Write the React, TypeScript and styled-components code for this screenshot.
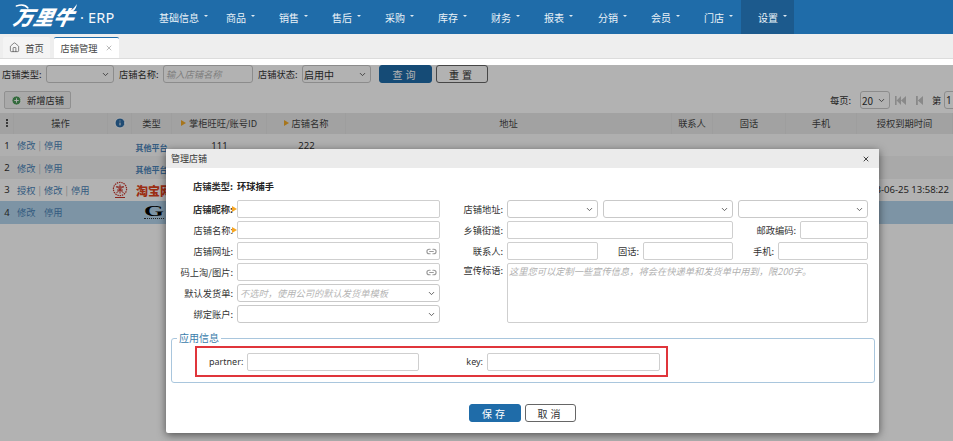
import React from 'react';
import styled, { createGlobalStyle } from 'styled-components';
import { ChevronDown, CirclePlus, EllipsisVertical, House, Info, Link2, X } from 'lucide-react';

const Global = createGlobalStyle`
  html, body { margin: 0; padding: 0; background: #fff; }
  * { box-sizing: border-box; }
  body { font-family: "Noto Sans CJK SC", "Noto Sans", sans-serif; font-size: 9.25px; color: #333; }
`;

const Page = styled.div`
  position: relative;
  width: 953px;
  height: 441px;
  overflow: hidden;
`;

const TopBar = styled.header`
  height: 34px;
  background: #1f6ca9;
  display: flex;
  align-items: stretch;
  padding-left: 14px;
`;

const Brand = styled.div`
  width: 128px;
  display: flex;
  align-items: center;
  color: #fff;
`;

const BrandMark = styled.span`
  position: relative;
  font-size: 20px;
  font-weight: 900;
  font-style: italic;
  line-height: 1;
  transform: skewX(-12deg);
  width: 62px;
  letter-spacing: 0;
`;

const BrandHorn = styled.svg`
  position: absolute;
  left: -2px;
  top: -4px;
  width: 66px;
  height: 12px;
`;

const BrandSuffix = styled.span`
  font-family: "Noto Sans", sans-serif;
  font-size: 14.5px;
  letter-spacing: 0.2px;
  white-space: pre;
  opacity: 0.95;
`;

const Nav = styled.nav`
  display: flex;
`;

const NavItem = styled.div<{ $active?: boolean; $w: number }>`
  width: ${p => p.$w}px;
  display: flex;
  align-items: center;
  padding-left: 17px;
  gap: 5px;
  color: #eaf2f8;
  font-size: 10px;
  background: ${p => (p.$active ? '#1c5a8d' : 'transparent')};
`;

const Caret = styled.span`
  width: 0;
  height: 0;
  border-left: 2px solid transparent;
  border-right: 2px solid transparent;
  border-top: 2px solid #dfe9f1;
  margin-top: -3px;
`;

const TabBar = styled.div`
  height: 25px;
  background: #eeeeee;
  border-bottom: 1px solid #dcdcdc;
  display: flex;
  align-items: flex-end;
  padding-left: 3px;
  gap: 4px;
`;

const Tab = styled.div<{ $active?: boolean }>`
  height: 21px;
  width: ${p => (p.$active ? 65 : 47)}px;
  display: flex;
  align-items: center;
  justify-content: center;
  gap: ${p => (p.$active ? 7 : 5)}px;
  background: ${p => (p.$active ? '#fff' : '#f4f4f4')};
  border-top: ${p => (p.$active ? '1px solid #1f6ca9' : 'none')};
  border-radius: 2px 2px 0 0;
  font-size: 9.25px;
  color: #444;
`;

const Content = styled.main`
  position: relative;
  height: 382px;
  background: #fff;
`;

const Dim = styled.div`
  position: absolute;
  inset: 0;
  background: rgba(0, 0, 0, 0.3);
`;

const FilterBar = styled.div`
  display: flex;
  align-items: center;
  height: 18px;
  margin-top: 6px;
  padding-left: 2px;
  gap: 5px;
`;

const Lbl = styled.span<{ $w?: number }>`
  width: ${p => (p.$w ? `${p.$w}px` : 'auto')};
  flex-shrink: 0;
  white-space: nowrap;
  color: #333;
  font-size: 9.25px;
`;

const SelectBox = styled.div<{ $w: number }>`
  width: ${p => p.$w}px;
  height: 18px;
  flex-shrink: 0;
  background: #fff;
  border: 1px solid #c9c9c9;
  border-radius: 3px;
  display: flex;
  align-items: center;
  justify-content: space-between;
  padding: 0 3px 0 1px;
  font-size: 10px;
  color: #333;
`;

const Placeholder = styled.span`
  color: #b5b5b5;
  font-style: italic;
  font-size: 9.25px;
  white-space: nowrap;
  padding-left: 1px;
`;

const SearchBox = styled.input<{ $w: number }>`
  width: ${p => p.$w}px;
  height: 18px;
  flex-shrink: 0;
  border: 1px solid #c9c9c9;
  border-radius: 3px;
  background: #fff;
  padding: 0 2px;
  font: inherit;
  &::placeholder { color: #b5b5b5; font-style: italic; }
`;

const Btn = styled.button<{ $primary?: boolean; $w: number; $ml?: number }>`
  width: ${p => p.$w}px;
  height: 18px;
  flex-shrink: 0;
  margin-left: ${p => p.$ml ?? 0}px;
  padding: 0;
  font-family: inherit;
  font-size: 10px;
  letter-spacing: 3px;
  border-radius: 3px;
  border: 1px solid ${p => (p.$primary ? '#1f6ca9' : '#666')};
  background: ${p => (p.$primary ? '#1f6ca9' : '#fff')};
  color: ${p => (p.$primary ? '#fff' : '#333')};
`;

const Toolbar = styled.div`
  display: flex;
  align-items: center;
  height: 18px;
  margin-top: 8px;
  padding-left: 4px;
`;

const AddBtn = styled.button`
  width: 67px;
  height: 18px;
  flex-shrink: 0;
  padding: 0;
  border: 1px solid #cfcfcf;
  border-radius: 2px;
  background: #f3f3f3;
  font-family: inherit;
  font-size: 9.25px;
  color: #333;
  display: flex;
  align-items: center;
  justify-content: center;
  gap: 5px;
`;

const Pager = styled.div`
  display: flex;
  align-items: center;
  margin-left: 759px;
  flex-shrink: 0;
  gap: 5px;
`;

const PagerIcon = styled.svg<{ $gap: number }>`
  display: block;
  flex-shrink: 0;
  margin-right: ${p => p.$gap}px;
  fill: #c4c4c4;
`;

const PageInput = styled.div`
  width: 30px;
  height: 18px;
  flex-shrink: 0;
  border: 1px solid #c9c9c9;
  border-radius: 3px;
  background: #fff;
  font-family: "Noto Sans", sans-serif;
  font-size: 10px;
  padding-left: 1px;
  display: flex;
  align-items: center;
  margin-left: -1px;
`;

const COLS = '14px 94px 24px 40px 95px 79px 326px 41px 73px 71px 96px';

const HeadRow = styled.div`
  display: grid;
  grid-template-columns: ${COLS};
  height: 21px;
  margin-top: 4px;
  background: #e9e9e9;
`;

const HeadCell = styled.div`
  display: flex;
  align-items: center;
  justify-content: center;
  padding-bottom: 1px;
  border-right: 1px solid #e2e2e2;
  font-size: 9.25px;
  color: #444;
  white-space: nowrap;
  gap: 2px;
`;

const Marker = styled.span`
  width: 0;
  height: 0;
  border-top: 3px solid transparent;
  border-bottom: 3px solid transparent;
  border-left: 5px solid #f0a92a;
  margin-right: 1px;
`;

const BodyRow = styled.div<{ $bg: string }>`
  display: grid;
  grid-template-columns: ${COLS};
  height: 22.4px;
  background: ${p => p.$bg};
`;

const Cell = styled.div<{ $align?: string; $pr?: number }>`
  display: flex;
  align-items: center;
  justify-content: ${p => p.$align ?? 'center'};
  padding-right: ${p => p.$pr ?? 0}px;
  font-family: "Noto Sans", "Noto Sans CJK SC", sans-serif;
  font-size: 9.5px;
  color: #333;
  white-space: nowrap;
  min-width: 0;
`;

const Ops = styled(Cell)`
  padding-left: 3px;
  justify-content: flex-start;
  gap: 3px;
  font-family: "Noto Sans CJK SC", sans-serif;
  font-size: 9.25px;
`;

const OpLink = styled.a`
  color: #4a83b8;
`;

const Sep = styled.span<{ $hidden?: boolean }>`
  color: #b8b8b8;
  visibility: ${p => (p.$hidden ? 'hidden' : 'visible')};
`;

const PlatformText = styled.span`
  font-family: "Noto Sans CJK SC", sans-serif;
  font-size: 8px;
  font-weight: 700;
  color: #4a83b8;
  margin-top: 4px;
  margin-left: -1px;
`;

const TaobaoText = styled.span`
  font-family: "Noto Sans CJK SC", sans-serif;
  font-size: 12px;
  font-weight: 900;
  color: #e0431c;
  margin-left: 4px;
  margin-top: 2px;
`;

const GLogo = styled.div`
  display: flex;
  flex-direction: column;
  align-items: center;
  margin-left: 11px;
  width: 22px;
`;

const GMark = styled.span`
  font-family: "Liberation Serif", serif;
  font-size: 15px;
  font-weight: 700;
  color: #000;
  line-height: 11px;
  display: block;
  transform: scaleX(1.7);
`;

const GRule = styled.span`
  display: block;
  width: 20px;
  height: 0;
  margin-top: 1px;
  border-top: 1px dotted #333;
`;

const Dialog = styled.section`
  position: absolute;
  left: 166px;
  top: 149px;
  width: 713px;
  height: 284px;
  background: #fff;
  border-radius: 2px;
  box-shadow: 0 2px 8px rgba(0, 0, 0, 0.55);
  display: flex;
  flex-direction: column;
`;

const DialogHead = styled.div`
  height: 19px;
  flex-shrink: 0;
  background: #ebebeb;
  display: flex;
  align-items: center;
  justify-content: space-between;
  padding: 0 9px 0 5px;
  font-size: 9px;
  color: #333;
`;

const CloseIcon = styled.span`
  display: flex;
  color: #444;
`;

const FormArea = styled.div`
  display: grid;
  grid-template-columns: 274px 405px;
  column-gap: 18px;
  margin-top: 9px;
  padding-left: 5px;
`;

const FormCol = styled.div`
  display: flex;
  flex-direction: column;
  gap: 3px;
`;

const TypeRow = styled.div`
  grid-column: 1 / span 2;
  display: flex;
  align-items: center;
  height: 18px;
  margin-bottom: 5px;
  gap: 4px;
`;

const FormRow = styled.div`
  display: flex;
  align-items: center;
  height: 18px;
  gap: 4px;
`;

const AreaRow = styled.div`
  display: flex;
  align-items: flex-start;
  height: 60px;
  gap: 4px;
`;

const FormLabel = styled.label<{ $w: number; $strong?: boolean; $marked?: boolean }>`
  width: ${p => p.$w}px;
  flex-shrink: 0;
  text-align: right;
  white-space: nowrap;
  font-size: 9.25px;
  font-weight: ${p => (p.$strong ? 700 : 400)};
  color: #333;
  position: relative;
  z-index: 1;
`;

const ReqMark = styled.i`
  position: absolute;
  right: -4px;
  top: 50%;
  margin-top: -3px;
  width: 0;
  height: 0;
  border-top: 3px solid transparent;
  border-bottom: 3px solid transparent;
  border-left: 5px solid #f5a623;
`;

const TypeValue = styled.strong`
  font-size: 9.25px;
  color: #222;
`;

const TextField = styled.input<{ $w: number }>`
  width: ${p => p.$w}px;
  height: 18px;
  flex-shrink: 0;
  border: 1px solid #cfcfcf;
  border-radius: 2px;
  background: #fff;
  padding: 0 3px;
  font: inherit;
`;

const SelectGap = styled(SelectBox)`
  margin-left: 1px;
`;

const TextAreaField = styled.textarea`
  width: 361px;
  height: 60px;
  flex-shrink: 0;
  resize: none;
  border: 1px solid #cfcfcf;
  border-radius: 2px;
  padding: 0 1px;
  font: inherit;
  &::placeholder { color: #b0b0b0; font-style: italic; }
`;

const LinkField = styled.div`
  width: 203px;
  height: 18px;
  flex-shrink: 0;
  border: 1px solid #cfcfcf;
  border-radius: 2px;
  display: flex;
  align-items: center;
  justify-content: flex-end;
  padding-right: 2px;
  color: #9a9a9a;
`;

const AppSet = styled.fieldset`
  margin: 10px 4px 0 5px;
  padding: 0;
  height: 50px;
  border: 1px solid #a9c6dd;
  border-radius: 3px;
  min-width: 0;
`;

const AppLegend = styled.legend`
  margin-left: 5px;
  padding: 0 2px;
  font-size: 10px;
  line-height: 10px;
  color: #3a7cab;
`;

const Highlight = styled.div`
  display: flex;
  align-items: center;
  width: 473px;
  height: 31px;
  margin: 3px 0 0 23px;
  border: 2px solid #e0353b;
  padding-left: 12px;
  gap: 4px;
`;

const AppLabel = styled.label`
  font-family: "Noto Sans", sans-serif;
  font-size: 9px;
  color: #333;
`;

const KeyLabel = styled(AppLabel)`
  margin-left: 43px;
`;

const Actions = styled.div`
  display: flex;
  justify-content: center;
  gap: 4px;
  margin-top: 21px;
`;

const menus: [string, number][] = [['基础信息', 67], ['商品', 53], ['销售', 53], ['售后', 53], ['采购', 53], ['库存', 53], ['财务', 53], ['报表', 54], ['分销', 53], ['会员', 53], ['门店', 54], ['设置', 53]];

const Chev = () => <ChevronDown size={9} strokeWidth={2.4} color="#555" />;

const Seal = () => (
  <svg width="16" height="18" viewBox="0 0 16 18">
    <circle cx="8" cy="8" r="6.6" fill="none" stroke="#c9342a" strokeWidth="1.2" strokeDasharray="1.5 .8" />
    <path d="M4 6h8M5 9h6M8 3.5v9M4.5 12l7-7M4.5 5l7 7" stroke="#c9342a" strokeWidth="1" />
    <path d="M3 16.5h10" stroke="#c9342a" strokeWidth="1" />
  </svg>
);

export default function App() {
  return (
    <Page>
      <Global />
      <TopBar>
        <Brand>
          <BrandMark>
            万里牛
            <BrandHorn viewBox="0 0 66 12" aria-hidden="true">
              <path d="M2 3c5-2 9-1 12 2" fill="none" stroke="#fff" strokeWidth="1.4" strokeLinecap="round" />
              <path d="M50 9c6 0 10-2 12-8 1 6-3 10-10 10z" fill="#fff" />
            </BrandHorn>
          </BrandMark>
          <BrandSuffix> · ERP</BrandSuffix>
        </Brand>
        <Nav>
          {menus.map(([m, w]) => (
            <NavItem key={m} $w={w} $active={m === '设置'}>{m}<Caret /></NavItem>
          ))}
        </Nav>
      </TopBar>
      <TabBar>
        <Tab><House size={11} strokeWidth={1.4} />首页</Tab>
        <Tab $active>店铺管理<X size={8} color="#999" /></Tab>
      </TabBar>
      <Content>
        <FilterBar>
          <Lbl $w={39}>店铺类型:</Lbl>
          <SelectBox $w={68}><span /><Chev /></SelectBox>
          <Lbl $w={39}>店铺名称:</Lbl>
          <SearchBox $w={90} placeholder="输入店铺名称" />
          <Lbl $w={39}>店铺状态:</Lbl>
          <SelectBox $w={69}>启用中<Chev /></SelectBox>
          <Btn $primary $w={53} $ml={3}>查询</Btn>
          <Btn $w={52} $ml={-1}>重置</Btn>
        </FilterBar>
        <Toolbar>
          <AddBtn><CirclePlus size={11} fill="#4d9a5a" color="#fff" strokeWidth={2} />新增店铺</AddBtn>
          <Pager>
            <Lbl $w={25}>每页:</Lbl>
            <SelectBox $w={30}>20<Chev /></SelectBox>
            <PagerIcon $gap={5} width="11" height="9" viewBox="0 0 11 9"><path d="M0 0h1.6v9H0zM6 0v9L1.6 4.5zM11 0v9L6 4.5z" /></PagerIcon>
            <PagerIcon $gap={4} width="7" height="9" viewBox="0 0 7 9"><path d="M0 0h1.8v9H0zM7 0v9L1.8 4.5z" /></PagerIcon>
            <Lbl $w={8}>第</Lbl>
            <PageInput>1</PageInput>
          </Pager>
        </Toolbar>
        <HeadRow>
          <HeadCell><EllipsisVertical size={10} strokeWidth={3} color="#222" /></HeadCell>
          <HeadCell>操作</HeadCell>
          <HeadCell><Info size={12} fill="#2f6ca5" color="#fff" strokeWidth={2} /></HeadCell>
          <HeadCell>类型</HeadCell>
          <HeadCell><Marker />掌柜旺旺/账号ID</HeadCell>
          <HeadCell><Marker />店铺名称</HeadCell>
          <HeadCell>地址</HeadCell>
          <HeadCell>联系人</HeadCell>
          <HeadCell>固话</HeadCell>
          <HeadCell>手机</HeadCell>
          <HeadCell>授权到期时间</HeadCell>
        </HeadRow>
        <BodyRow $bg="#fbfbfb">
          <Cell>1</Cell>
          <Ops><OpLink>修改</OpLink><Sep>|</Sep><OpLink>停用</OpLink></Ops>
          <Cell />
          <Cell><PlatformText>其他平台</PlatformText></Cell>
          <Cell>111</Cell>
          <Cell>222</Cell>
        </BodyRow>
        <BodyRow $bg="#f3f3f3">
          <Cell>2</Cell>
          <Ops><OpLink>修改</OpLink><Sep>|</Sep><OpLink>停用</OpLink></Ops>
          <Cell />
          <Cell><PlatformText>其他平台</PlatformText></Cell>
        </BodyRow>
        <BodyRow $bg="#ffffff">
          <Cell>3</Cell>
          <Ops><OpLink>授权</OpLink><Sep>|</Sep><OpLink>修改</OpLink><Sep>|</Sep><OpLink>停用</OpLink></Ops>
          <Cell><Seal /></Cell>
          <Cell $align="flex-start"><TaobaoText>淘宝网</TaobaoText></Cell>
          <Cell /><Cell /><Cell /><Cell /><Cell /><Cell />
          <Cell $align="flex-end" $pr={4}>2023-06-25 13:58:22</Cell>
        </BodyRow>
        <BodyRow $bg="#b4d5ec">
          <Cell>4</Cell>
          <Ops><OpLink>修改</OpLink><Sep $hidden>|</Sep><OpLink>停用</OpLink></Ops>
          <Cell />
          <Cell $align="flex-start"><GLogo><GMark>G</GMark><GRule /></GLogo></Cell>
        </BodyRow>
        <Dim />
      </Content>
      <Dialog>
        <DialogHead>管理店铺<CloseIcon><X size={8} strokeWidth={3} /></CloseIcon></DialogHead>
        <FormArea>
          <TypeRow>
            <FormLabel $w={62} $strong>店铺类型:</FormLabel>
            <TypeValue>环球捕手</TypeValue>
          </TypeRow>
          <FormCol>
            <FormRow><FormLabel $w={62} $strong>店铺昵称:<ReqMark /></FormLabel><TextField $w={203} /></FormRow>
            <FormRow><FormLabel $w={62}>店铺名称:<ReqMark /></FormLabel><TextField $w={203} /></FormRow>
            <FormRow><FormLabel $w={62}>店铺网址:</FormLabel><LinkField><Link2 size={11} strokeWidth={2.5} /></LinkField></FormRow>
            <FormRow><FormLabel $w={62}>码上淘/图片:</FormLabel><LinkField><Link2 size={11} strokeWidth={2.5} /></LinkField></FormRow>
            <FormRow><FormLabel $w={62}>默认发货单:</FormLabel><SelectBox $w={203}><Placeholder>不选时，使用公司的默认发货单模板</Placeholder><Chev /></SelectBox></FormRow>
            <FormRow><FormLabel $w={62}>绑定账户:</FormLabel><SelectBox $w={203}><span /><Chev /></SelectBox></FormRow>
          </FormCol>
          <FormCol>
            <FormRow>
              <FormLabel $w={40}>店铺地址:</FormLabel>
              <SelectBox $w={91}><span /><Chev /></SelectBox>
              <SelectGap $w={130}><span /><Chev /></SelectGap>
              <SelectGap $w={130}><span /><Chev /></SelectGap>
            </FormRow>
            <FormRow>
              <FormLabel $w={40}>乡镇街道:</FormLabel>
              <TextField $w={226} />
              <FormLabel $w={59}>邮政编码:</FormLabel>
              <TextField $w={68} />
            </FormRow>
            <FormRow>
              <FormLabel $w={40}>联系人:</FormLabel>
              <TextField $w={91} />
              <FormLabel $w={37}>固话:</FormLabel>
              <TextField $w={90} />
              <FormLabel $w={37}>手机:</FormLabel>
              <TextField $w={90} />
            </FormRow>
            <AreaRow>
              <FormLabel $w={40}>宣传标语:</FormLabel>
              <TextAreaField placeholder="这里您可以定制一些宣传信息，将会在快递单和发货单中用到，限200字。" />
            </AreaRow>
          </FormCol>
        </FormArea>
        <AppSet>
          <AppLegend>应用信息</AppLegend>
          <Highlight>
            <AppLabel>partner:</AppLabel>
            <TextField $w={172} />
            <KeyLabel>key:</KeyLabel>
            <TextField $w={173} />
          </Highlight>
        </AppSet>
        <Actions>
          <Btn $primary $w={52}>保存</Btn>
          <Btn $w={51}>取消</Btn>
        </Actions>
      </Dialog>
    </Page>
  );
}
